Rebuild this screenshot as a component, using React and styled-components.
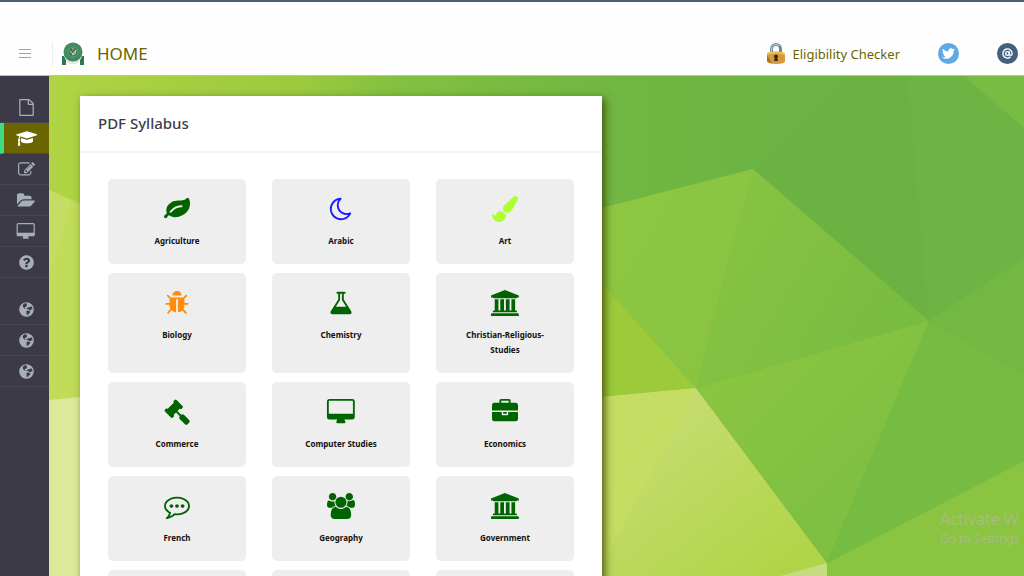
import React from "react";
import styled, { createGlobalStyle } from "styled-components";
import { FaTwitter } from "react-icons/fa";
import { AtSign } from "lucide-react";

const Global = createGlobalStyle`
  * { box-sizing: border-box; }
  body { margin: 0; background: #fff; font-family: "Noto Sans", "Open Sans", sans-serif; }
`;

const glyphs = {
  leaf: [1792, "M1280 704q0-26-19-45t-45-19q-172 0-318 49.5t-259.5 134-235.5 219.5q-19 21-19 45 0 26 19 45t45 19q24 0 45-19 27-24 74-71t67-66q137-124 268.5-176t313.5-52q26 0 45-19t19-45zm512-198q0 95-20 193-46 224-184.5 383t-357.5 268q-214 108-438 108-148 0-286-47-15-5-88-42t-96-37q-16 0-39.5 32t-45 70-52.5 70-60 32q-43 0-63.5-17.5t-45.5-59.5q-2-4-6-11t-5.5-10-3-9.5-1.5-13.5q0-35 31-73.5t68-65.5 68-56 31-48q0-4-14-38t-16-44q-9-51-9-104 0-115 43.5-220t119-184.5 170.5-139 204-95.5q55-18 145-25.5t179.5-9 178.5-6 163.5-24 113.5-56.5l29.5-29.5 29.5-28 27-20 36.5-16 43.5-4.5q39 0 70.5 46t47.5 112 24 124 8 96z"],
  moon: [1792, "M1390 1303q-54 9-110 9-182 0-337-90t-245-245-90-337q0-192 104-357-201 60-328.5 229t-127.5 384q0 130 51 248.5t136.5 204 204 136.5 248.5 51q144 0 273.5-61.5t220.5-171.5zm203-85q-94 203-283.5 324.5t-413.5 121.5q-156 0-298-61t-245-164-164-245-61-298q0-153 57.5-292.5t156-241.5 235.5-164.5 290-68.5q44-2 61 39 18 41-15 72-86 78-131.5 181.5t-45.5 218.5q0 148 73 273t198 198 273 73q118 0 228-51 41-18 72 13 14 14 17.5 34t-4.5 38z"],
  brush: [1792, "M1615 0q70 0 122.5 46.5t52.5 116.5q0 63-45 151-332 629-465 752-97 91-218 91-126 0-216.5-92.5t-90.5-219.5q0-128 92-212l638-579q59-54 130-54zm-909 1034q39 76 106.5 130t150.5 76l1 71q4 213-129.5 347t-348.5 134q-123 0-218-46.5t-152.5-127.5-86.5-183-29-220q7 5 41 30t62 44.5 59 36.5 46 17q41 0 55-37 25-66 57.5-112.5t69.5-76 88-47.5 103-25.5 125-10.5z"],
  bug: [1792, "M1696 960q0 26-19 45t-45 19h-224q0 171-67 290l208 209q19 19 19 45t-19 45q-18 19-45 19t-45-19l-198-197q-5 5-15 13t-42 28.5-65 36.5-82 29-97 13v-896h-128v896q-51 0-101.5-13.5t-87-33-66-39-43.5-32.5l-15-14-183 207q-20 21-48 21-24 0-43-16-19-18-20.5-44.5t15.5-46.5l202-227q-58-114-58-274h-224q-26 0-45-19t-19-45 19-45 45-19h224v-294l-173-173q-19-19-19-45t19-45 45-19 45 19l173 173h844l173-173q19-19 45-19t45 19 19 45-19 45l-173 173v294h224q26 0 45 19t19 45zm-480-576h-640q0-133 93.5-226.5t226.5-93.5 226.5 93.5 93.5 226.5z"],
  flask: [1792, "M1591 1448q56 89 21.5 152.5t-140.5 63.5h-1152q-106 0-140.5-63.5t21.5-152.5l503-793v-399h-64q-26 0-45-19t-19-45 19-45 45-19h512q26 0 45 19t19 45-19 45-45 19h-64v399zm-779-725l-272 429h712l-272-429-20-31v-436h-128v436z"],
  bank: [1920, "M960 0l960 384v128h-128q0 26-20.5 45t-48.5 19h-1526q-28 0-48.5-19t-20.5-45h-128v-128zm-704 640h256v768h128v-768h256v768h128v-768h256v768h128v-768h256v768h59q28 0 48.5 19t20.5 45v64h-1664v-64q0-26 20.5-45t48.5-19h59v-768zm1595 960q28 0 48.5 19t20.5 45v128h-1920v-128q0-26 20.5-45t48.5-19h1782z"],
  gavel: [1792, "M1771 1536q0 53-37 90l-107 108q-39 37-91 37-53 0-90-37l-363-364q-38-36-38-90 0-53 43-96l-256-256-126 126q-14 14-34 14t-34-14q2 2 12.5 12t12.5 13 10 11.5 10 13.5 6 13.5 5.5 16.5 1.5 18q0 38-28 68-3 3-16.5 18t-19 20.5-18.5 16.5-22 15.5-22 9-26 4.5q-40 0-68-28l-408-408q-28-28-28-68 0-13 4.5-26t9-22 15.5-22 16.5-18.5 20.5-19 18-16.5q30-28 68-28 10 0 18 1.5t16.5 5.5 13.5 6 13.5 10 11.5 10 13 12.5 12 12.5q-14-14-14-34t14-34l348-348q14-14 34-14t34 14q-2-2-12.5-12t-12.5-13-10-11.5-10-13.5-6-13.5-5.5-16.5-1.5-18q0-38 28-68 3-3 16.5-18t19-20.5 18.5-16.5 22-15.5 22-9 26-4.5q40 0 68 28l408 408q28 28 28 68 0 13-4.5 26t-9 22-15.5 22-16.5 18.5-20.5 19-18 16.5q-30 28-68 28-10 0-18-1.5t-16.5-5.5-13.5-6-13.5-10-11.5-10-13-12.5-12-12.5q14 14 14 34t-14 34l-126 126 256 256q43-43 96-43 52 0 91 37l363 363q37 39 37 91z"],
  desktop: [2048, "M1856 992v-832q0-13-9.5-22.5t-22.5-9.5h-1600q-13 0-22.5 9.5t-9.5 22.5v832q0 13 9.5 22.5t22.5 9.5h1600q13 0 22.5-9.5t9.5-22.5zm128-832v1088q0 66-47 113t-113 47h-544q0 37 16 77.5t32 71 16 43.5q0 26-19 45t-45 19h-512q-26 0-45-19t-19-45q0-14 16-44t32-70 16-78h-544q-66 0-113-47t-47-113v-1088q0-66 47-113t113-47h1600q66 0 113 47t47 113z"],
  briefcase: [1792, "M640 256h512v-128h-512v128zm1152 640v480q0 66-47 113t-113 47h-1472q-66 0-113-47t-47-113v-480h672v160q0 26 19 45t45 19h320q26 0 45-19t19-45v-160h672zm-768 0v128h-256v-128h256zm768-480v384h-1792v-384q0-66 47-113t113-47h352v-160q0-40 28-68t68-28h576q40 0 68 28t28 68v160h352q66 0 113 47t47 113z"],
  comment: [1792, "M640 896q0 53-37.5 90.5t-90.5 37.5-90.5-37.5-37.5-90.5 37.5-90.5 90.5-37.5 90.5 37.5 37.5 90.5zm384 0q0 53-37.5 90.5t-90.5 37.5-90.5-37.5-37.5-90.5 37.5-90.5 90.5-37.5 90.5 37.5 37.5 90.5zm384 0q0 53-37.5 90.5t-90.5 37.5-90.5-37.5-37.5-90.5 37.5-90.5 90.5-37.5 90.5 37.5 37.5 90.5zm-512-512q-204 0-381.5 69.5t-282 187.5-104.5 255q0 112 71.5 213.5t201.5 175.5l87 50-27 96q-24 91-70 172 152-63 275-171l43-38 57 6q69 8 130 8 204 0 381.5-69.5t282-187.5 104.5-255-104.5-255-282-187.5-381.5-69.5zm896 512q0 174-120 321.5t-326 233-450 85.5q-70 0-145-8-198 175-460 242-49 14-114 22h-5q-15 0-27-10.5t-16-27.5v-1q-3-4-.5-12t2-10 4.5-9.5l6-9 7-8.5 8-9q7-8 31-34.5t34.5-38 31-39.5 32.5-51 27-59 26-76q-157-89-247.5-220t-90.5-281q0-174 120-321.5t326-233 450-85.5 450 85.5 326 233 120 321.5z"],
  users: [1920, "M593 896q-162 5-265 128h-134q-82 0-138-40.5t-56-118.5q0-353 124-353 6 0 43.5 21t97.5 42.5 119 21.5q67 0 133-23-5 37-5 66 0 159 93 292zm1071 637q0 120-73 189.5t-194 69.5h-874q-121 0-194-69.5t-73-189.5q0-53 3.5-103.5t14-109 26.5-108.5 43-97.5 62-81 85.5-53.5 111.5-20q10 0 43 21.5t73 48 107 48 135 21.5 135-21.5 107-48 73-48 43-21.5q61 0 111.5 20t85.5 53.5 62 81 43 97.5 26.5 108.5 14 109 3.5 103.5zm-1024-1277q0 106-75 181t-181 75-181-75-75-181 75-181 181-75 181 75 75 181zm704 384q0 159-112.5 271.5t-271.5 112.5-271.5-112.5-112.5-271.5 112.5-271.5 271.5-112.5 271.5 112.5 112.5 271.5zm576 225q0 78-56 118.5t-138 40.5h-134q-103-123-265-128 93-133 93-292 0-29-5-66 66 23 133 23 59 0 119-21.5t97.5-42.5 43.5-21q124 0 124 353zm-128-609q0 106-75 181t-181 75-181-75-75-181 75-181 181-75 181 75 75 181z"],
  cap: [2304, "M1774 836l18 316q4 69-82 128t-235 93.5-323 34.5-323-34.5-235-93.5-82-128l18-316 574 181q22 7 48 7t48-7zm530-324q0 23-22 31l-1120 352q-4 1-10 1t-10-1l-652-206q-43 34-71 111.5t-34 178.5q63 36 63 109 0 69-58 107l58 433q2 14-8 25-9 11-24 11h-192q-15 0-24-11-10-11-8-25l58-433q-58-38-58-107 0-73 65-111 11-207 98-330l-333-104q-22-8-22-31t22-31l1120-352q4-1 10-1t10 1l1120 352q22 8 22 31z"],
  file: [1792, "M1596 380q28 28 48 76t20 88v1152q0 40-28 68t-68 28h-1344q-40 0-68-28t-28-68v-1600q0-40 28-68t68-28h896q40 0 88 20t76 48zm-444-244v376h376q-10-29-22-41l-313-313q-12-12-41-22zm384 1528v-1024h-416q-40 0-68-28t-28-68v-416h-768v1536h1280z"],
  edit: [1792, "M888 1184l116-116-152-152-116 116v56h96v96h56zm440-720q-16-16-33 1l-350 350q-17 17-1 33t33-1l350-350q17-17 1-33zm80 594v190q0 119-84.5 203.5t-203.5 84.5h-832q-119 0-203.5-84.5t-84.5-203.5v-832q0-119 84.5-203.5t203.5-84.5h832q63 0 117 25 15 7 18 23 3 17-9 29l-49 49q-14 14-32 8-23-6-45-6h-832q-66 0-113 47t-47 113v832q0 66 47 113t113 47h832q66 0 113-47t47-113v-126q0-13 9-22l64-64q15-15 35-7t20 29zm-96-738l288 288-672 672h-288v-288zm444 132l-92 92-288-288 92-92q28-28 68-28t68 28l152 152q28 28 28 68t-28 68z"],
  folder: [1920, "M1879 952q0 31-31 66l-336 396q-43 51-120.5 86.5t-143.5 35.5h-1088q-34 0-60.5-13t-26.5-43q0-31 31-66l336-396q43-51 120.5-86.5t143.5-35.5h1088q34 0 60.5 13t26.5 43zm-343-344v160h-832q-94 0-197 47.5t-164 119.5l-337 396-5 6q0-4-.5-12.5t-.5-12.5v-960q0-92 66-158t158-66h320q92 0 158 66t66 158v32h544q92 0 158 66t66 158z"],
  question: [1792, "M1024 1376v-192q0-14-9-23t-23-9h-192q-14 0-23 9t-9 23v192q0 14 9 23t23 9h192q14 0 23-9t9-23zm256-672q0-88-55.5-163t-138.5-116-170-41q-243 0-371 213-15 24 8 42l132 100q7 6 19 6 16 0 25-12 53-68 86-92 34-24 86-24 48 0 85.5 26t37.5 59q0 38-20 61t-68 45q-63 28-115.5 86.5t-52.5 125.5v36q0 14 9 23t23 9h192q14 0 23-9t9-23q0-19 21.5-49.5t54.5-49.5q32-18 49-28.5t46-35 44.5-48 28-60.5 12.5-81zm384 192q0 209-103 385.5t-279.5 279.5-385.5 103-385.5-103-279.5-279.5-103-385.5 103-385.5 279.5-279.5 385.5-103 385.5 103 279.5 279.5 103 385.5z"],
  globe: [1792, "M896 128a768 768 0 1 0 0 1536a768 768 0 1 0 0-1536zM560 330L740 240L960 300L900 400L960 480L860 580L740 620L700 700L800 780L740 850L640 740L520 620L500 440zM1240 620L1400 560L1520 740L1500 920L1380 880L1300 1010L1160 960L1080 840L940 850L900 760L1040 680zM900 1060L1060 980L1200 1080L1300 1080L1240 1260L1110 1340L1040 1480L940 1480L900 1300z"],
};

const Svg = styled.svg`
  display: block;
  height: ${(p) => p.$size}px;
  flex: none;
`;

function Glyph({ name, size }) {
  const [w, d] = glyphs[name];
  return (
    <Svg $size={size} viewBox={`0 0 ${w} 1792`} fill="currentColor" fillRule={name === "globe" ? "evenodd" : "nonzero"} aria-hidden="true">
      <path d={d} />
    </Svg>
  );
}

const Page = styled.div`
  display: flex;
  flex-direction: column;
  height: 100vh;
  overflow: hidden;
`;
const Header = styled.header`
  display: flex;
  align-items: center;
  flex: none;
  height: 76px;
  padding: 30px 6px 0 19px;
  border-top: 2px solid #4b5b76;
  border-bottom: 1px solid #b9c4a4;
  background: #fefefe;
`;
const MenuButton = styled.button`
  display: flex;
  padding: 0 21px 0 0;
  border: 0;
  border-right: 1px solid #eee;
  height: 24px;
  align-items: center;
  background: none;
  color: #98a6ad;
`;
const Brand = styled.a`
  display: flex;
  align-items: center;
  gap: 13px;
  margin-left: 9px;
  color: #6b6500;
  font-size: 17px;
  line-height: 24px;
  text-decoration: none;
`;
const Links = styled.nav`
  display: flex;
  align-items: center;
  gap: 38px;
  margin-left: auto;
`;
const CheckerLink = styled.a`
  display: flex;
  align-items: center;
  gap: 7px;
  color: #6b6500;
  font-size: 13px;
  line-height: 20px;
  text-decoration: none;
`;
const RoundLink = styled.a`
  display: flex;
  align-items: center;
  justify-content: center;
  width: 21px;
  height: 21px;
  border-radius: 50%;
  color: #fff;
  background: ${(p) => p.$bg};
`;
const Body = styled.div`
  display: flex;
  flex: 1;
  min-height: 0;
`;
const Sidebar = styled.nav`
  flex: none;
  width: 49px;
  padding-top: 16px;
  background: #3d3a48;
`;
const SideGroup = styled.div`
  margin-bottom: 16px;
`;
const SideLink = styled.a`
  display: flex;
  align-items: center;
  justify-content: center;
  height: 31px;
  padding-left: ${(p) => (p.$active ? 0 : 3)}px;
  border-bottom: 1px solid #474553;
  border-left: ${(p) => (p.$active ? "4px solid #40dc84" : "0")};
  background: ${(p) => (p.$active ? "#6a6500" : "transparent")};
  color: ${(p) => (p.$active ? "#fff" : "#a5b1b7")};
`;
const Stage = styled.div`
  position: relative;
  flex: 1;
  min-width: 0;
  overflow: hidden;
`;
const Wallpaper = styled.svg`
  position: absolute;
  inset: 0;
  width: 100%;
  height: 100%;
`;
const Scroller = styled.main`
  position: relative;
  height: 100%;
  padding: 20px 31px;
  overflow-y: auto;
  scrollbar-width: none;
`;
const Panel = styled.section`
  width: 100%;
  max-width: 522px;
  background: #fff;
  box-shadow: 3px 3px 8px rgba(60, 70, 10, 0.85);
`;
const PanelTitle = styled.h1`
  margin: 0;
  padding: 15px 18px 16px;
  border-bottom: 2px solid #f3f3f3;
  color: #3b3e47;
  font-size: 15px;
  line-height: 24px;
  font-weight: 500;
`;
const Grid = styled.div`
  display: grid;
  grid-template-columns: repeat(3, 1fr);
  gap: 9px 26px;
  padding: 26px 28px;
`;
const Card = styled.a`
  display: flex;
  flex-direction: column;
  align-items: center;
  gap: 11px;
  min-height: 85px;
  padding: 17px 20px 16px;
  border-radius: 5px;
  background: #eee;
  color: ${(p) => p.$color};
  text-decoration: none;
`;
const CardLabel = styled.span`
  color: #111;
  font-size: 8px;
  line-height: 15px;
  font-weight: 700;
  text-align: center;
`;
const Watermark = styled.div`
  position: absolute;
  right: 0;
  bottom: 28px;
  width: 84px;
  white-space: nowrap;
  color: rgba(185, 185, 160, 0.65);
  font: 12px/18px "Noto Sans", sans-serif;
`;
const WatermarkTitle = styled.div`
  font-size: 16px;
  line-height: 22px;
`;

const green = "#006400";
const subjects = [
  ["Agriculture", "leaf", green], ["Arabic", "moon", "#1a1aff"], ["Art", "brush", "#adff2f"],
  ["Biology", "bug", "#ff8c0a"], ["Chemistry", "flask", green], ["Christian-Religious-Studies", "bank", green],
  ["Commerce", "gavel", green], ["Computer Studies", "desktop", green], ["Economics", "briefcase", green],
  ["French", "comment", green], ["Geography", "users", green], ["Government", "bank", green],
  ["", "file", green], ["", "folder", green], ["", "edit", green],
];
const sideGroups = [
  [["Pages", "file"], ["Syllabus", "cap"], ["Practice", "edit"], ["Downloads", "folder"], ["Computer test", "desktop"], ["Help", "question"]],
  [["Portal", "globe"], ["News", "globe"], ["Website", "globe"]],
];

function Emblem() {
  return (
    <svg width="22" height="24" viewBox="0 0 22 24" aria-hidden="true">
      <path d="M0 14h2l2 4v5H0zM22 14h-2l-2 4v5h4z" fill="#2c7a4b" />
      <path d="M3 16l3 5q5 2 10 0l3-5z" fill="#e4e6e2" />
      <circle cx="11" cy="10" r="9.500" fill="#438a60" />
      <circle cx="11" cy="10" r="5" fill="#3a7c58" stroke="#629f7b" />
      <path d="M8 9l3 3 3-4-1 4-3 1" fill="none" stroke="#c3d6c0" />
      <circle cx="11" cy="7" r="1" fill="#cf9b3c" />
    </svg>
  );
}

function Lock() {
  return (
    <svg width="18" height="22" viewBox="0 0 18 22" aria-hidden="true">
      <path d="M4.500 11V6a4.500 4.500 0 0 1 9 0v5" fill="none" stroke="#6b8798" strokeWidth="3" />
      <path d="M4.300 10V6a4.600 4.600 0 0 1 8-3" fill="none" stroke="#c9d9e2" />
      <path d="M0 10q9-3 18 0v8q0 3-9 3t-9-3z" fill="#d69b38" />
      <path d="M0 10q9-3 18 0v2q-9-3-18 0z" fill="#ecc05c" />
      <path d="M0 12l5 8q-5-1-5-2z" fill="#a8741e" />
      <circle cx="9" cy="13.500" r="2" fill="#33271c" />
      <path d="M8 14h2l1 4H7z" fill="#33271c" />
    </svg>
  );
}

function Background() {
  return (
    <Wallpaper viewBox="49 76 975 500" preserveAspectRatio="xMinYMin slice" aria-hidden="true">
      <defs>
        <linearGradient id="top" gradientUnits="userSpaceOnUse" x1="49" y1="0" x2="760" y2="0">
          <stop offset="0" stopColor="#b0d444" />
          <stop offset="0.35" stopColor="#9bca3e" />
          <stop offset="0.5" stopColor="#82c040" />
          <stop offset="0.78" stopColor="#71b742" />
          <stop offset="1" stopColor="#6cb443" />
        </linearGradient>
        <linearGradient id="mid" gradientUnits="userSpaceOnUse" x1="640" y1="240" x2="860" y2="370">
          <stop offset="0" stopColor="#8cc541" />
          <stop offset="1" stopColor="#79bc42" />
        </linearGradient>
        <linearGradient id="tri" gradientUnits="userSpaceOnUse" x1="740" y1="360" x2="860" y2="480">
          <stop offset="0" stopColor="#8ac540" />
          <stop offset="1" stopColor="#7fbf41" />
        </linearGradient>
        <linearGradient id="pale" gradientUnits="userSpaceOnUse" x1="660" y1="420" x2="780" y2="576">
          <stop offset="0" stopColor="#c6dc6e" />
          <stop offset="1" stopColor="#b0d447" />
        </linearGradient>
      </defs>
      <path d="M49 76H1024V576H49z" fill="url(#top)" />
      <path d="M720 200L850 76H908L929 321z" fill="#6bb243" />
      <path d="M908 76H1024V300L929 321z" fill="#6cb544" />
      <path d="M964 76H1024V128z" fill="#78bc43" />
      <path d="M49 190L90 208V400H49z" fill="#c1dc58" />
      <path d="M49 190L72 200L49 275z" fill="#c5dd64" />
      <path d="M49 400L110 394V576H49z" fill="#dce99a" />
      <path d="M590 211L753 169L929 321L696 388L590 270z" fill="url(#mid)" />
      <path d="M590 211L753 169L712 320L696 388L590 270z" fill="#8dc641" opacity="0.6" />
      <path d="M590 270L696 388L590 398z" fill="#9cca3a" />
      <path d="M590 398L696 388L827 563V576H590z" fill="url(#pale)" />
      <path d="M590 398L696 388L600 570z" fill="#c6dd60" opacity="0.8" />
      <path d="M696 388L929 321L827 563z" fill="url(#tri)" />
      <path d="M929 321L1024 375V461L827 563z" fill="#76bb42" />
      <path d="M929 321L1024 258V375z" fill="#72b843" />
      <path d="M827 563L1024 461V576H827z" fill="#8ac440" />
      <path d="M780 576L827 563V576z" fill="#c5dc80" />
    </Wallpaper>
  );
}

export default function App() {
  return (
    <Page>
      <Global />
      <Header>
        <MenuButton aria-label="Toggle menu">
          <svg width="12" height="10" viewBox="0 0 12 10" stroke="currentColor" shapeRendering="crispEdges">
            <path d="M0 .5h12M0 4.500h12M0 8.500h12" />
          </svg>
        </MenuButton>
        <Brand href="#home"><Emblem />HOME</Brand>
        <Links>
          <CheckerLink href="#eligibility"><Lock />Eligibility Checker</CheckerLink>
          <RoundLink href="#twitter" aria-label="Twitter" $bg="#5fa9e8"><FaTwitter size={13} /></RoundLink>
          <RoundLink href="#contact" aria-label="Contact" $bg="#44607a"><AtSign size={11} strokeWidth={3} /></RoundLink>
        </Links>
      </Header>
      <Body>
        <Sidebar>
          {sideGroups.map((group, i) => (
            <SideGroup key={i}>
              {group.map(([label, icon]) => (
                <SideLink key={label} href={`#${icon}`} aria-label={label} $active={icon === "cap"}>
                  <Glyph name={icon} size={17} />
                </SideLink>
              ))}
            </SideGroup>
          ))}
        </Sidebar>
        <Stage>
          <Background />
          <Scroller>
            <Panel>
              <PanelTitle>PDF Syllabus</PanelTitle>
              <Grid>
                {subjects.map(([name, icon, color], i) => (
                  <Card key={i} href={`#subject-${i + 1}`} $color={color}>
                    <Glyph name={icon} size={26} />
                    {name && <CardLabel>{name}</CardLabel>}
                  </Card>
                ))}
              </Grid>
            </Panel>
          </Scroller>
          <Watermark>
            <WatermarkTitle>Activate W</WatermarkTitle>
            Go to Settings
          </Watermark>
        </Stage>
      </Body>
    </Page>
  );
}
